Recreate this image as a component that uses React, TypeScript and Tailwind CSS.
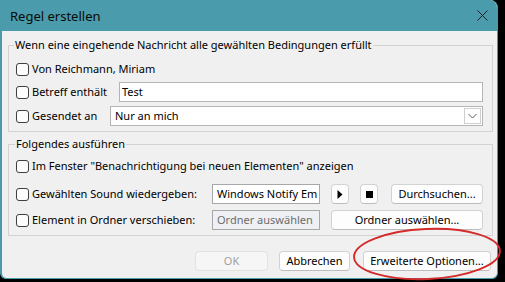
import React from "react";

function Checkbox() {
  return (
    <span className="w-[13px] h-[13px] shrink-0 rounded-[3px] border border-[#3f3f3f] bg-[#fcfcfc]" />
  );
}

function Btn({
  children,
  className = "",
  disabled = false,
}: {
  children?: React.ReactNode;
  className?: string;
  disabled?: boolean;
}) {
  return (
    <div
      className={`h-[20px] shrink-0 flex items-center justify-center rounded-[4px] border ${
        disabled
          ? "border-[#e2e2e2] bg-[#f6f6f6] text-[#a0a0a0]"
          : "border-[#d2d2d2] border-b-[#bdbdbd] bg-[#fdfdfd] text-black"
      } ${className}`}
    >
      {children}
    </div>
  );
}

function CheckLabel({ text, className }: { text: string; className: string }) {
  return (
    <div className={`flex items-center gap-[3px] shrink-0 whitespace-nowrap ${className}`}>
      <Checkbox />
      <span>{text}</span>
    </div>
  );
}

export default function App() {
  return (
    <div className="w-[505px] h-[282px] bg-black relative overflow-hidden font-['Segoe_UI','Noto_Sans',sans-serif] text-[11px] leading-[16px] text-black">
      <div className="w-[498px] h-[279px] flex flex-col bg-[#f0f0f0] border-l-2 border-r border-b border-[#4a9bab] rounded-tr-[8px] rounded-br-[6px] rounded-bl-[6px] overflow-hidden">
        {/* Title bar */}
        <div className="h-[31px] shrink-0 bg-[#4a9bab] flex items-center justify-between pl-[8px] pr-[8px]">
          <span className="text-[13px] text-[#0a0a0a]">Regel erstellen</span>
          <svg width="11" height="11" viewBox="0 0 11 11" className="mr-[1px]">
            <path d="M0.5 0.5 L10.5 10.5 M10.5 0.5 L0.5 10.5" stroke="#1c1c1c" strokeWidth="1" />
          </svg>
        </div>

        <div className="flex flex-col pl-[6px] pr-[4px]">
          {/* Group 1 */}
          <fieldset className="mt-[6px] border border-[#d3d3d3] pl-[7px] pr-[9px] pb-[5px] flex flex-col">
            <legend className="ml-[-2px] px-[1px] leading-[16px]">
              Wenn eine eingehende Nachricht alle gewählten Bedingungen erfüllt
            </legend>
            <div className="mt-[6px] h-[20px] flex items-center">
              <CheckLabel text="Von Reichmann, Miriam" className="" />
            </div>
            <div className="mt-[3px] h-[20px] flex items-center">
              <CheckLabel text="Betreff enthält" className="w-[103px]" />
              <div className="flex-1 h-[20px] border border-[#b4b4b4] bg-white pl-[2px] flex items-center">
                Test
              </div>
            </div>
            <div className="mt-[4px] h-[20px] flex items-center">
              <CheckLabel text="Gesendet an" className="w-[94px]" />
              <div className="flex-1 h-[20px] border border-[#b4b4b4] bg-white pl-[4px] pr-[1px] flex items-center justify-between">
                <span>Nur an mich</span>
                <div className="w-[17px] h-[16px] border border-[#cfcfcf] bg-white flex items-center justify-center">
                  <svg width="9" height="6" viewBox="0 0 9 6">
                    <path d="M0.5 1 L4.5 5 L8.5 1" fill="none" stroke="#5a5a5a" strokeWidth="1" />
                  </svg>
                </div>
              </div>
            </div>
          </fieldset>

          {/* Group 2 */}
          <fieldset className="mt-[4px] border border-[#d3d3d3] pl-[7px] pr-[9px] pb-[5px] flex flex-col">
            <legend className="ml-[-1px] px-[1px] leading-[16px]">Folgendes ausführen</legend>
            <div className="mt-[4px] h-[20px] flex items-center">
              <CheckLabel
                text={'Im Fenster "Benachrichtigung bei neuen Elementen" anzeigen'}
                className=""
              />
            </div>
            <div className="mt-[8px] h-[20px] flex items-center">
              <CheckLabel text="Gewählten Sound wiedergeben:" className="w-[196px]" />
              <div className="w-[108px] shrink-0 h-[20px] border border-[#a8a8a8] bg-white pl-[4px] flex items-center overflow-hidden whitespace-nowrap">
                Windows Notify Em
              </div>
              <Btn className="ml-[11px] w-[18px]">
                <svg width="6" height="9" viewBox="0 0 6 9">
                  <path d="M0.5 0 L5.5 4.5 L0.5 9 Z" fill="#000" />
                </svg>
              </Btn>
              <Btn className="ml-[11px] w-[18px]">
                <span className="w-[7px] h-[7px] bg-black" />
              </Btn>
              <Btn className="ml-[13px] flex-1">Durchsuchen...</Btn>
            </div>
            <div className="mt-[6px] h-[20px] flex items-center">
              <CheckLabel text="Element in Ordner verschieben:" className="w-[196px]" />
              <div className="w-[108px] shrink-0 h-[20px] border border-[#a8a8a8] bg-[#eef0f3] text-[#6d6d6d] pl-[4px] flex items-center overflow-hidden whitespace-nowrap">
                Ordner auswählen
              </div>
              <Btn className="ml-[11px] flex-1">Ordner auswählen...</Btn>
            </div>
          </fieldset>

          {/* Bottom buttons */}
          <div className="mt-[15px] pr-[2px] flex justify-end">
            <Btn disabled className="w-[73px]">OK</Btn>
            <Btn className="ml-[11px] w-[71px]">Abbrechen</Btn>
            <Btn className="ml-[13px] w-[128px]">Erweiterte Optionen...</Btn>
          </div>
        </div>
      </div>

      {/* Red annotation ellipse */}
      <svg
        className="absolute left-[350px] top-[225px] pointer-events-none"
        width="155"
        height="57"
        viewBox="0 0 155 57"
      >
        <ellipse cx="77" cy="29" rx="73" ry="25" fill="none" stroke="#d42b2b" strokeWidth="1.9" transform="rotate(-2.5 77 29)" />
      </svg>
    </div>
  );
}
